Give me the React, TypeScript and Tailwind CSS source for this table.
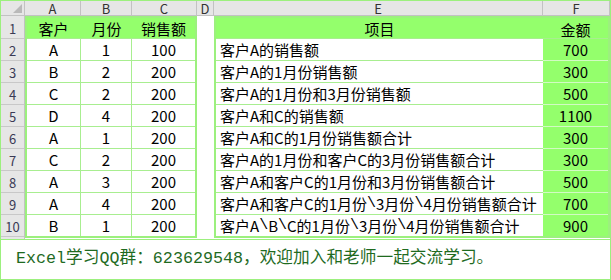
import React from 'react';

const leftRows = [
  ['A', '1', '100'],
  ['B', '2', '200'],
  ['C', '2', '200'],
  ['D', '4', '200'],
  ['A', '1', '200'],
  ['C', '2', '200'],
  ['A', '3', '200'],
  ['A', '4', '200'],
  ['B', '1', '200'],
];

const rightRows = [
  ['客户A的销售额', '700'],
  ['客户A的1月份销售额', '300'],
  ['客户A的1月份和3月份销售额', '500'],
  ['客户A和C的销售额', '1100'],
  ['客户A和C的1月份销售额合计', '300'],
  ['客户A的1月份和客户C的3月份销售额合计', '300'],
  ['客户A和客户C的1月份和3月份销售额合计', '500'],
  ['客户A和客户C的1月份\\3月份\\4月份销售额合计', '700'],
  ['客户A\\B\\C的1月份\\3月份\\4月份销售额合计', '900'],
];

const font = { fontFamily: '"Noto Sans CJK SC", "Liberation Sans", sans-serif' };
const mono = { fontFamily: '"Liberation Mono", monospace' };

// backslash in the CJK font comes out too wide, so set it on its own
const Item = ({ text }: { text: string }) => (
  <>
    {text.split('\\').map((part, i) => (
      <React.Fragment key={i}>
        {i > 0 && <span style={mono}>\</span>}
        {part}
      </React.Fragment>
    ))}
  </>
);

export default function App() {
  return (
    <div className="w-[611px] h-[280px] bg-white border border-[#9cf07e] flex flex-col overflow-hidden" style={font}>
      {/* column headers */}
      <div className="flex h-[15px] bg-[#e6e6e6] text-[13px] leading-none text-[#333]">
        <div className="w-[24px] h-full border-r border-b border-[#c2c2c2] relative">
          <div className="absolute right-[2px] bottom-[2px] w-0 h-0 border-l-[9px] border-l-transparent border-b-[9px] border-b-[#b9b9b9]" />
        </div>
        {[
          ['A', 'w-[56px]'],
          ['B', 'w-[51px]'],
          ['C', 'w-[65px]'],
          ['D', 'w-[17px]'],
          ['E', 'w-[329px]'],
          ['F', 'w-[67px]'],
        ].map(([l, w]) => (
          <div key={l} className={`${w} h-full border-r border-b border-[#c2c2c2] flex items-center justify-center`}>
            {l}
          </div>
        ))}
      </div>

      {/* body */}
      <div className="flex h-[223px]">
        {/* row numbers */}
        <div className="w-[24px] h-full bg-[#e6e6e6] border-r border-[#c2c2c2] flex flex-col text-[13px] leading-none text-[#3a3a55]">
          {Array.from({ length: 10 }, (_, i) => (
            <div
              key={i}
              className={`${i === 0 ? 'h-[23px]' : 'h-[22px]'} border-b border-[#c8c8c8] flex items-end justify-center pb-[3px]`}
            >
              {i + 1}
            </div>
          ))}
        </div>

        {/* A:C table */}
        <div className="w-[172px] h-[222px] border-2 border-[#9cf07e] flex flex-col text-[15px] leading-none text-black">
          <div className="h-[21px] flex bg-[#94ff6c] border-b border-[#a8ee90]">
            <div className="w-[54px] flex items-end justify-center pb-[2px] border-r border-[#94ff6c]">客户</div>
            <div className="w-[51px] flex items-end justify-center pb-[2px]">月份</div>
            <div className="w-[63px] flex items-end justify-center pb-[2px]">销售额</div>
          </div>
          {leftRows.map((r, i) => (
            <div
              key={i}
              className={`${i === leftRows.length - 1 ? 'h-[21px]' : 'h-[22px] border-b'} flex border-[#a8ee90]`}
            >
              <div className="w-[54px] border-r border-[#a8ee90] flex items-end justify-center pb-[3px]">{r[0]}</div>
              <div className="w-[51px] border-r border-[#a8ee90] flex items-end justify-center pb-[3px]">{r[1]}</div>
              <div className="w-[63px] flex items-end justify-center pb-[3px]">{r[2]}</div>
            </div>
          ))}
        </div>

        {/* D spacer */}
        <div className="w-[17px]" />

        {/* E:F table */}
        <div className="w-[396px] h-[222px] border-2 border-[#9cf07e] flex flex-col text-[15px] leading-none text-black">
          <div className="h-[21px] flex bg-[#94ff6c] border-b border-[#a8ee90]">
            <div className="w-[327px] flex items-end justify-center pb-[2px]">项目</div>
            <div className="w-[65px] flex items-end justify-center pb-[1px]">金额</div>
          </div>
          {rightRows.map((r, i) => {
            const last = i === rightRows.length - 1;
            return (
              <div key={i} className={`${last ? 'h-[21px]' : 'h-[22px]'} flex`}>
                <div
                  className={`w-[327px] bg-white ${last ? '' : 'border-b border-[#a8ee90]'} flex items-end pl-[4px] pb-[3px] whitespace-nowrap`}
                >
                  <Item text={r[0]} />
                </div>
                <div
                  className={`w-[65px] bg-[#94ff6c] ${last ? '' : 'border-b border-[#d2fac4]'} flex items-end justify-center pb-[3px]`}
                >
                  {r[1]}
                </div>
              </div>
            );
          })}
        </div>
      </div>

      {/* footer text box */}
      <div className="flex-1 border-t border-[#9cf07e] flex items-center pl-[15px]">
        <span
          className="text-[16.7px] leading-none text-[#1f6b1f] whitespace-nowrap"
          style={{ fontFamily: '"Liberation Mono", "Noto Sans CJK SC", monospace' }}
        >
          Excel学习QQ群：623629548，欢迎加入和老师一起交流学习。
        </span>
      </div>
    </div>
  );
}
